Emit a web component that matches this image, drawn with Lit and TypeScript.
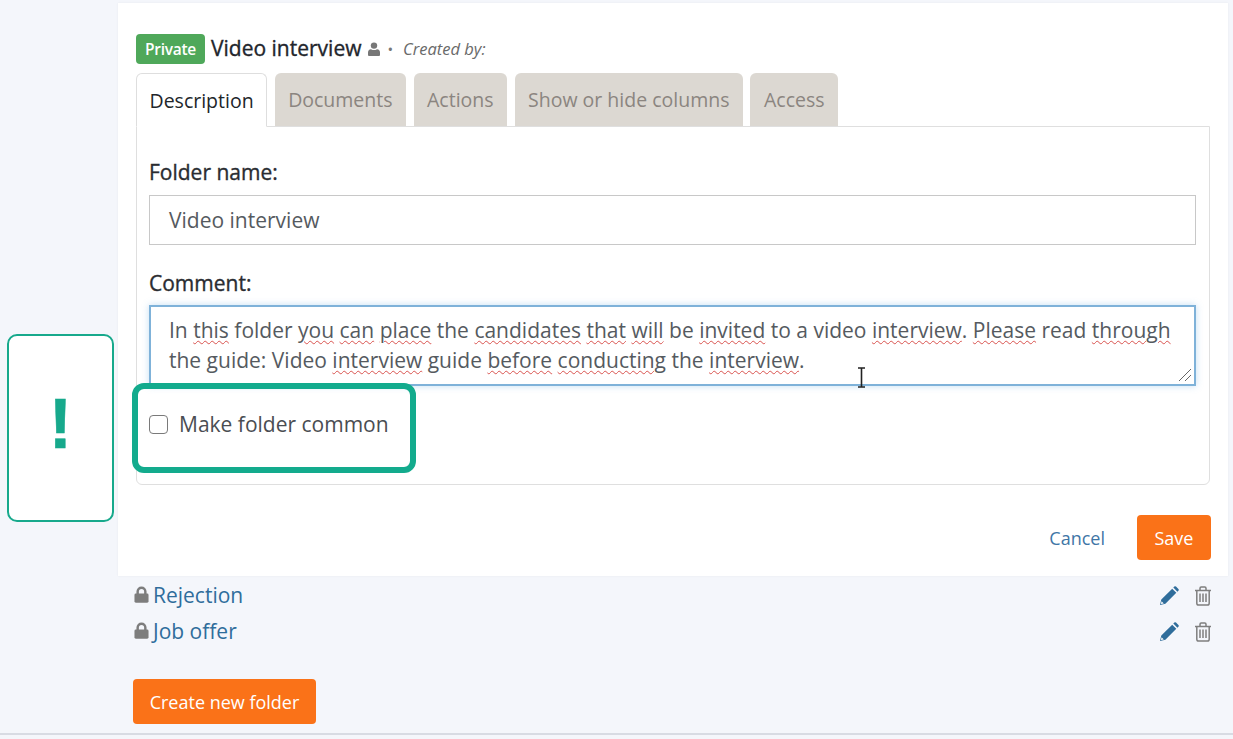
import { LitElement, html, css } from "lit";
import { customElement } from "lit/decorators.js";

const lock = html`<svg class="lock" viewBox="0 0 16 18"><path d="M2.6 8.5V5.8a5.4 5.4 0 0 1 10.8 0V8.5h-2.6V5.8a2.8 2.8 0 0 0-5.6 0V8.5z" fill="#7d7d7d"/><rect x="0.5" y="8" width="15" height="9.8" rx="1.5" fill="#7d7d7d"/></svg>`;
const pencil = html`<svg class="pencil" viewBox="0 0 20 20"><path d="M1 19l1.3-5.4L13.2 2.7l4.1 4.1L6.4 17.7z M14.3 1.6l1-1a1.2 1.2 0 0 1 1.7 0l2.4 2.4a1.2 1.2 0 0 1 0 1.7l-1 1z" fill="#2f6d9b"/><path d="M2.6 15.2l2.2 2.2-2.9.7z" fill="#fff"/></svg>`;
const trash = html`<svg class="trash" viewBox="0 0 18 20" fill="none" stroke="#7f7f7f" stroke-width="1.5"><path d="M1 4.5h16M6 4.5V2.2Q6 1 7.2 1h3.6Q12 1 12 2.2v2.3M2.8 4.5V17.2Q2.8 19 4.6 19h8.8q1.8 0 1.8-1.8V4.5"/><path d="M6 7.5v8.5M9 7.5v8.5M12 7.5v8.5"/></svg>`;

@customElement("app-root")
export class AppRoot extends LitElement {
  static styles = css`
    :host { display: block; position: relative; width: 1233px; height: 739px; overflow: hidden; background: #f4f6fb;
      font-family: "Open Sans", "Noto Sans", sans-serif; color: #212529; box-sizing: border-box; }
    * { box-sizing: border-box; }
    .page { padding: 3px 5px 0 118px; height: 733px; display: flex; flex-direction: column; }
    .rule { height: 2px; background: #d8dbe3; }
    .panel { background: #fff; height: 573px; padding: 31px 18px 0 18px; box-shadow: 0 0 2px rgba(0,0,0,.06); }
    .head { display: flex; align-items: center; height: 30px; }
    .badge { background: #4fa85a; color: #fff; font-size: 15.5px; font-weight: 600; height: 30px; width: 69px; border-radius: 4px;
      display: flex; align-items: center; justify-content: center; letter-spacing: -.3px; }
    .title { font-size: 21px; margin-left: 6px; color: #22252c; -webkit-text-stroke: .35px #22252c; line-height: 30px; position: relative; top: -1px; }
    .user { width: 12px; height: 14px; margin-left: 7px; }
    .dot { color: #777; font-size: 15px; margin-left: 7px; }
    .by { font-style: italic; font-size: 16.5px; color: #6a6a6a; margin: -2px 0 0 10px; }
    .tabs { display: flex; gap: 7.5px; margin-top: 9px; height: 53px; position: relative; z-index: 1; }
    .tab { height: 53px; padding: 0 13.5px; border-radius: 6px 6px 0 0; font-size: 19.5px; display: flex; align-items: center; background: #dcd8d2; color: #8b8580; }
    .tab.on { background: #fff; color: #212529; border: 1px solid #dedede; border-bottom: 1px solid #fff; height: 54px; padding: 0 12.5px; }
    .card { height: 359px; border: 1px solid #dfdfdf; border-radius: 0 0 6px 6px; padding: 32px 13px 0 12px; position: relative; }
    label.lab { display: block; font-size: 21px; color: #2a2c31; -webkit-text-stroke: .35px #2a2c31; line-height: 27px; }
    .input { margin-top: 9px; height: 50px; border: 1px solid #c8c8c8; padding: 0 19px; font-size: 21px; color: #555a60; display: flex; align-items: center; }
    .lab2 { margin-top: 25px; }
    .ta { margin-top: 8px; height: 81px; border: 2px solid #7fb2d9; padding: 8px 18px; font-size: 21px; line-height: 30px; color: #555a60; position: relative; white-space: nowrap;
      box-shadow: 0 0 7px rgba(90,160,220,.35); background: #fff; }
    .ta b { font-weight: 400; text-decoration: underline wavy #d9534f; text-decoration-thickness: 1px; text-underline-offset: 2px; }
    .grip { position: absolute; right: 2px; bottom: 2px; width: 14px; height: 14px; }
    .check { display: flex; align-items: center; gap: 11px; margin-top: 24px; font-size: 21px; color: #4a4d52; line-height: 28px; }
    .box { width: 19px; height: 19px; border: 1px solid #7a7a7a; border-radius: 4px; background: #fff; flex: none; }
    .actions { display: flex; justify-content: flex-end; align-items: center; margin: 30px -1px 0 0; gap: 32px; }
    .cancel { color: #3f76a6; font-size: 18px; }
    .btn { background: #fa7218; color: #fff; border-radius: 4px; font-size: 18px; display: flex; align-items: center; justify-content: center; font-weight: 500; }
    .save { width: 74px; height: 45px; }
    .rows { padding: 1px 16px 0 15px; }
    .row { display: flex; align-items: center; height: 36px; color: #2f6d9b; font-size: 21px; }
    .lock { width: 15px; height: 17px; margin: -2px 5px 0 1px; flex: none; }
    .row span { flex: 1; margin-left: -1px; }
    .pencil { width: 20px; height: 20px; margin: 2px 15px 0 0; flex: none; }
    .trash { width: 18px; height: 20px; margin-top: 2px; flex: none; }
    .create { width: 183px; height: 45px; margin: 30px 0 0 15px; }
    .callout { position: absolute; left: 7px; top: 334px; width: 107px; height: 188px; border: 2px solid #17a98c; border-radius: 10px; background: #fff;
      display: flex; align-items: center; justify-content: center; color: #17a98c; font-family: "Liberation Sans", sans-serif; font-size: 70px; font-weight: 700; line-height: 1; padding-bottom: 8px; -webkit-text-stroke: .5px #17a98c; }
    .hl { position: absolute; left: 132px; top: 383px; width: 284px; height: 90px; border: 6px solid #13ab8d; border-radius: 12px; }
    .ibeam { position: absolute; left: 856px; top: 367px; width: 11px; height: 21px; }
  `;

  render() {
    return html`
      <div class="page">
        <div class="panel">
          <div class="head">
            <div class="badge">Private</div>
            <div class="title">Video interview</div>
            <svg class="user" viewBox="0 0 12 14"><circle cx="6" cy="3.6" r="3.2" fill="#777"/><path d="M0 13V10.5Q0 7.5 3 7.2Q6 9 9 7.2Q12 7.5 12 10.5V13Q12 14 11 14H1Q0 14 0 13Z" fill="#777"/></svg>
            <span class="dot">•</span>
            <span class="by">Created by:</span>
          </div>
          <div class="tabs">
            <div class="tab on">Description</div>
            <div class="tab">Documents</div>
            <div class="tab">Actions</div>
            <div class="tab">Show or hide columns</div>
            <div class="tab">Access</div>
          </div>
          <div class="card">
            <label class="lab">Folder name:</label>
            <div class="input">Video interview</div>
            <label class="lab lab2">Comment:</label>
            <div class="ta">In <b>this</b> folder <b>you</b> <b>can</b> <b>place</b> the <b>candidates</b> <b>that</b> <b>will</b> be <b>invited</b> to a video <b>interview</b>. <b>Please</b> read <b>through</b><br>the guide: Video <b>interview</b> guide <b>before</b> <b>conducting</b> the <b>interview</b>.
              <svg class="grip" viewBox="0 0 14 14" fill="none" stroke="#666" stroke-width="1"><path d="M1 13L13 1M7 13L13 7"/></svg>
            </div>
            <div class="check"><div class="box"></div>Make folder common</div>
          </div>
          <div class="actions"><span class="cancel">Cancel</span><div class="btn save">Save</div></div>
        </div>
        <div class="rows">
          <div class="row">${lock}<span>Rejection</span>${pencil}${trash}</div>
          <div class="row">${lock}<span>Job offer</span>${pencil}${trash}</div>
        </div>
        <div class="btn create">Create new folder</div>
      </div>
      <div class="rule"></div>
      <div class="callout">!</div>
      <div class="hl"></div>
      <svg class="ibeam" viewBox="0 0 11 21" fill="none" stroke="#222" stroke-width="1.6"><path d="M2 1h7M2 20h7M5.5 1v19"/></svg>
    `;
  }
}
